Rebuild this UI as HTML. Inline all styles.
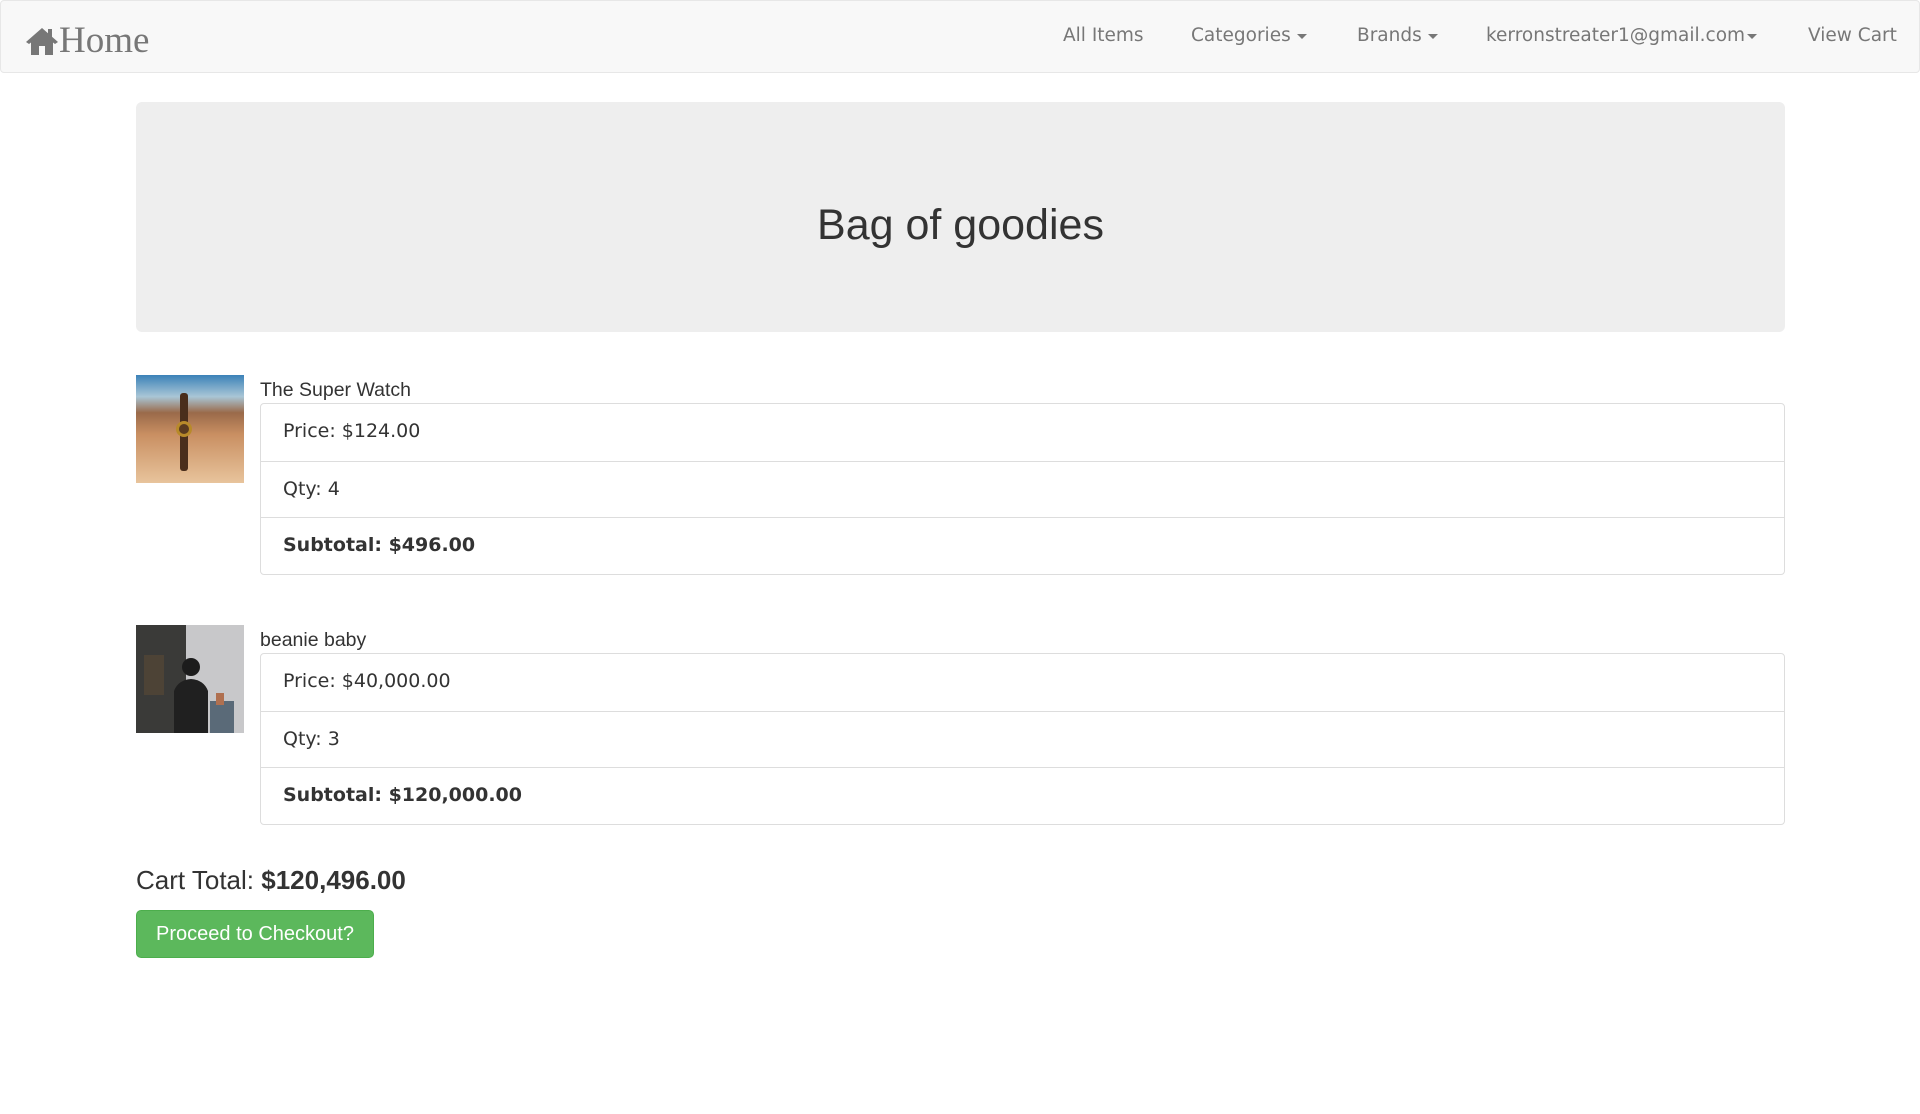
<!DOCTYPE html>
<html><head><meta charset="utf-8"><style>
*{box-sizing:border-box;margin:0;padding:0}
body{width:1920px;height:1114px;background:#fff;font-family:"Liberation Sans",Arial,sans-serif;color:#333;position:relative;overflow:hidden}
.nav{position:absolute;left:0;top:0;width:1920px;height:73px;background:#f8f8f8;border:1px solid #e7e7e7;border-radius:4px}
.brand{position:absolute;left:24px;top:18px;font-family:"Liberation Serif",serif;font-size:37px;color:#777;line-height:44px;display:flex;align-items:center}
.ni{position:absolute;top:22px;font-family:"DejaVu Sans",Verdana,sans-serif;font-size:18.5px;color:#777;line-height:26px;white-space:nowrap}
.caret{display:inline-block;width:0;height:0;border-left:5px solid transparent;border-right:5px solid transparent;border-top:5px solid #777;vertical-align:middle;margin-left:6px}
.jumbo{position:absolute;left:136px;top:102px;width:1649px;height:230px;background:#eee;border-radius:6px;text-align:center}
.jumbo h1{font-weight:normal;font-size:43px;line-height:50px;margin-top:98px;color:#333}
.img{position:absolute;left:136px;width:108px;height:108px}
.title{position:absolute;left:260px;font-size:19.5px;line-height:22px;color:#333}
.list{position:absolute;left:260px;width:1525px;border:1px solid #ddd;border-radius:4px}
.row{height:56.5px;border-top:1px solid #ddd;padding-left:22px;font-family:"DejaVu Sans",Verdana,sans-serif;font-size:19px;line-height:55px;color:#333}
.row:first-child{border-top:none}
.b{font-weight:bold}
.total{position:absolute;left:136px;top:864px;font-size:26px;line-height:32px}
.btn{position:absolute;left:136px;top:910px;width:238px;height:48px;background:#5cb85c;border:1px solid #4cae4c;border-radius:5px;color:#fff;font-size:20px;text-align:center;line-height:46px}
</style></head><body>
<div class="nav">
 <div class="brand"><svg width="34" height="30" viewBox="0 0 34 30"><path d="M17 2 L1 16 L4 18 L6 16.5 V29 H14 V20 H20 V29 H28 V16.5 L30 18 L33 16 L27 10.8 V3 H23 V7.3 Z" fill="#777"/></svg>Home</div>
 <div class="ni" style="left:1062px">All Items</div>
 <div class="ni" style="left:1190px">Categories<span class="caret"></span></div>
 <div class="ni" style="left:1356px">Brands<span class="caret"></span></div>
 <div class="ni" style="left:1485px">kerronstreater1@gmail.com<span class="caret" style="margin-left:2px"></span></div>
 <div class="ni" style="left:1807px">View Cart</div>
</div>
<div class="jumbo"><h1>Bag of goodies</h1></div>

<svg class="img" style="top:375px" viewBox="0 0 108 108"><defs><linearGradient id="g1" x1="0" y1="0" x2="0" y2="1"><stop offset="0" stop-color="#3b82b8"/><stop offset="0.2" stop-color="#a9c6d6"/><stop offset="0.35" stop-color="#9a6a4a"/><stop offset="0.55" stop-color="#c98f62"/><stop offset="1" stop-color="#e8c49c"/></linearGradient></defs><rect width="108" height="108" fill="url(#g1)"/><rect x="44" y="18" width="8" height="78" rx="3" fill="#4a2e1c"/><circle cx="48" cy="54" r="8" fill="#b88a2a"/><circle cx="48" cy="54" r="5" fill="#5a3a20"/></svg>
<div class="title" style="top:379px">The Super Watch</div>
<div class="list" style="top:403px"><div class="row">Price: $124.00</div><div class="row">Qty: 4</div><div class="row b">Subtotal: $496.00</div></div>

<svg class="img" style="top:625px" viewBox="0 0 108 108"><rect width="108" height="108" fill="#c8c8ca"/><rect width="50" height="108" fill="#3a3a38"/><rect x="8" y="30" width="20" height="40" fill="#5a4a36" opacity="0.6"/><circle cx="55" cy="42" r="9" fill="#1c1c1c"/><path d="M38 108 V66 Q42 55 55 54 Q68 55 72 66 V108 Z" fill="#202020"/><rect x="74" y="76" width="24" height="32" fill="#5a6a78"/><rect x="80" y="68" width="8" height="12" fill="#b07050"/></svg>
<div class="title" style="top:629px">beanie baby</div>
<div class="list" style="top:653px"><div class="row">Price: $40,000.00</div><div class="row">Qty: 3</div><div class="row b">Subtotal: $120,000.00</div></div>

<div class="total">Cart Total: <b>$120,496.00</b></div>
<div class="btn">Proceed to Checkout?</div>
</body></html>
